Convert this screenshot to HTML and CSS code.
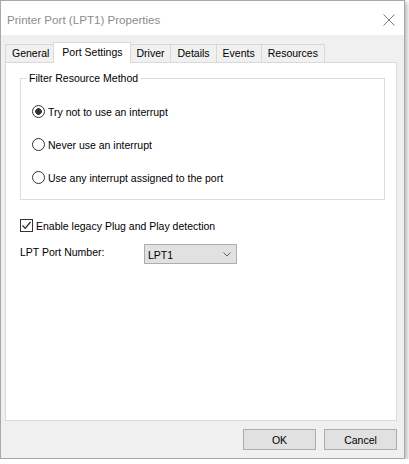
FILE: index.html
```html
<!DOCTYPE html>
<html lang="en">
<head>
   <meta charset="UTF-8">
   <title>Printer Port (LPT1) Properties</title>
   <link rel="stylesheet" href="styles.css">
</head>
<body>
   <div class="window">
      <div class="titlebar">
         <span class="title">Printer Port (LPT1) Properties</span>
         <svg class="close" width="12" height="12" viewBox="0 0 12 12">
            <path d="M0.5 0.5 L11.5 11.5 M11.5 0.5 L0.5 11.5" stroke="#7a7a7a" stroke-width="1" fill="none"/>
         </svg>
      </div>

      <div class="client">
         <div class="tabs">
            <div class="tab">General</div>
            <div class="tab active">Port Settings</div>
            <div class="tab">Driver</div>
            <div class="tab">Details</div>
            <div class="tab">Events</div>
            <div class="tab">Resources</div>
         </div>

         <div class="panel">
            <fieldset class="group">
               <legend>Filter Resource Method</legend>
               <label class="option"><input type="radio" name="method" checked> Try not to use an interrupt</label>
               <label class="option"><input type="radio" name="method"> Never use an interrupt</label>
               <label class="option"><input type="radio" name="method"> Use any interrupt assigned to the port</label>
            </fieldset>

            <label class="check-row">
               <span class="checkbox">
                  <svg width="11" height="11" viewBox="0 0 11 11">
                     <polyline points="1.5,5.5 4.2,8.3 9.5,2" stroke="#222" stroke-width="1.2" fill="none"/>
                  </svg>
               </span>
               Enable legacy Plug and Play detection
            </label>

            <div class="port-row">
               <span class="port-label">LPT Port Number:</span>
               <div class="combo">
                  <span>LPT1</span>
                  <svg width="8" height="5" viewBox="0 0 8 5">
                     <polyline points="0.5,0.5 4,4 7.5,0.5" stroke="#606060" stroke-width="1" fill="none"/>
                  </svg>
               </div>
            </div>
         </div>

         <div class="actions">
            <button class="btn">OK</button>
            <button class="btn">Cancel</button>
         </div>
      </div>
   </div>
</body>
</html>
```

FILE: styles.css
```css
body {
   margin: 0;
   background: #fff;
   font-family: "Liberation Sans", Arial, sans-serif;
   font-size: 10.5px;
   color: #000;
}
.window {
   width: 405px;
   height: 459px;
   box-sizing: border-box;
   border: 1px solid #a8a8a8;
   box-shadow: 2px 2px 5px rgba(0, 0, 0, 0.3);
   display: flex;
   flex-direction: column;
   background: #f0f0f0;
}
.titlebar {
   height: 34px;
   background: #fff;
   display: flex;
   align-items: center;
   padding-left: 6px;
   padding-right: 9px;
}
.title {
   font-size: 11.6px;
   color: #8c8c8c;
   margin-top: 3px;
}
.close {
   margin-left: auto;
   margin-top: 3px;
}
.client {
   flex: 1;
   padding: 7px 7px 0 4px;
   display: flex;
   flex-direction: column;
}
.tabs {
   display: flex;
   align-items: flex-end;
   height: 20px;
   padding-left: 1px;
}
.tab {
   height: 18px;
   box-sizing: border-box;
   line-height: 17px;
   padding: 0 6px;
   border: 1px solid #d9d9d9;
   border-bottom: none;
   margin-left: -1px;
   background: #f0f0f0;
}
.tab.active {
   height: 21px;
   line-height: 19px;
   margin: 0 -2px -1px -3px;
   padding: 0 8px;
   background: #fff;
   position: relative;
   z-index: 1;
}
.tab.active + .tab {
   margin-left: 0;
}
.panel {
   height: 359px;
   box-sizing: border-box;
   background: #fff;
   border: 1px solid #d9d9d9;
   padding: 0 0 0 14px;
}
.group {
   width: 365px;
   box-sizing: border-box;
   margin: 8px 0 0 0;
   padding: 20px 0 15px 0;
   border: 1px solid #dcdcdc;
   display: flex;
   flex-direction: column;
   gap: 20px;
}
.group legend {
   line-height: 14px;
   padding: 0 3px;
   margin-left: 5px;
}
.option {
   display: flex;
   align-items: center;
   height: 13px;
   gap: 3px;
   margin-left: 11px;
}
.option input {
   appearance: none;
   width: 13px;
   height: 13px;
   margin: 0;
   border: 1px solid #333;
   border-radius: 50%;
   background: #fff;
}
.option input:checked {
   background: radial-gradient(circle, #333 3px, #fff 3.6px);
}
.check-row {
   display: flex;
   align-items: center;
   gap: 3px;
   margin-top: 19px;
   height: 13px;
}
.checkbox {
   width: 13px;
   height: 13px;
   box-sizing: border-box;
   border: 1px solid #333;
   display: flex;
   align-items: center;
   justify-content: center;
}
.port-row {
   display: flex;
   align-items: flex-start;
   margin-top: 12px;
}
.port-label {
   width: 124px;
   padding-top: 2px;
}
.combo {
   width: 93px;
   height: 20px;
   box-sizing: border-box;
   background: #e1e1e1;
   border: 1px solid #adadad;
   display: flex;
   align-items: center;
   justify-content: space-between;
   padding: 1px 5px 0 3px;
}
.actions {
   display: flex;
   justify-content: flex-end;
   gap: 8px;
   margin-top: 8px;
}
.btn {
   width: 73px;
   height: 21px;
   background: #e1e1e1;
   border: 1px solid #adadad;
   font-family: "Liberation Sans", Arial, sans-serif;
   font-size: 10.5px;
   color: #000;
   padding: 0;
}
```
